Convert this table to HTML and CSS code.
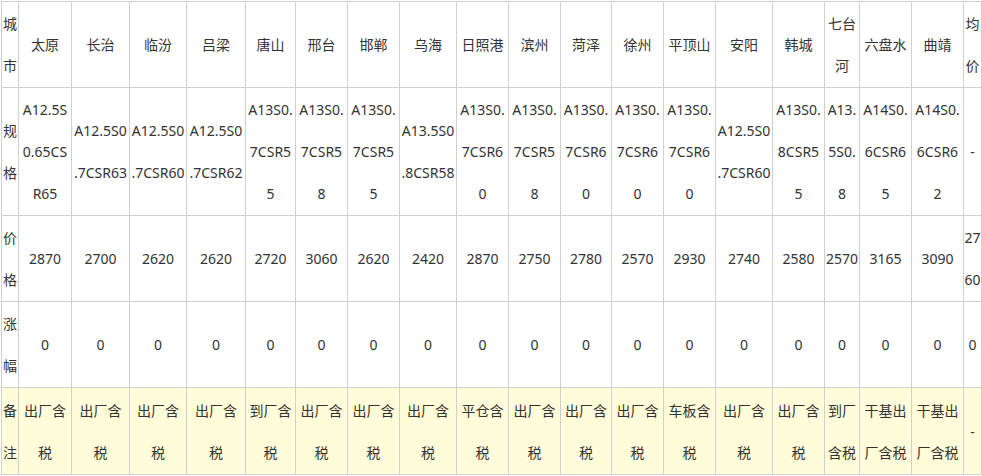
FILE: index.html
```html
<!DOCTYPE html>
<html lang="zh">
<head>
<meta charset="utf-8">
<title>价格表</title>
<link rel="stylesheet" href="styles.css">
</head>
<body>
<div class="table">
  <div class="c">城<br>市</div>
  <div class="c">太原</div>
  <div class="c">长治</div>
  <div class="c">临汾</div>
  <div class="c">吕梁</div>
  <div class="c">唐山</div>
  <div class="c">邢台</div>
  <div class="c">邯郸</div>
  <div class="c">乌海</div>
  <div class="c">日照港</div>
  <div class="c">滨州</div>
  <div class="c">菏泽</div>
  <div class="c">徐州</div>
  <div class="c">平顶山</div>
  <div class="c">安阳</div>
  <div class="c">韩城</div>
  <div class="c">七台<br>河</div>
  <div class="c">六盘水</div>
  <div class="c">曲靖</div>
  <div class="c">均<br>价</div>

  <div class="c">规<br>格</div>
  <div class="c">A12.5S<br>0.65CS<br>R65</div>
  <div class="c">A12.5S0<br>.7CSR63</div>
  <div class="c">A12.5S0<br>.7CSR60</div>
  <div class="c">A12.5S0<br>.7CSR62</div>
  <div class="c">A13S0.<br>7CSR5<br>5</div>
  <div class="c">A13S0.<br>7CSR5<br>8</div>
  <div class="c">A13S0.<br>7CSR5<br>5</div>
  <div class="c">A13.5S0<br>.8CSR58</div>
  <div class="c">A13S0.<br>7CSR6<br>0</div>
  <div class="c">A13S0.<br>7CSR5<br>8</div>
  <div class="c">A13S0.<br>7CSR6<br>0</div>
  <div class="c">A13S0.<br>7CSR6<br>0</div>
  <div class="c">A13S0.<br>7CSR6<br>0</div>
  <div class="c">A12.5S0<br>.7CSR60</div>
  <div class="c">A13S0.<br>8CSR5<br>5</div>
  <div class="c">A13.<br>5S0.<br>8</div>
  <div class="c">A14S0.<br>6CSR6<br>5</div>
  <div class="c">A14S0.<br>6CSR6<br>2</div>
  <div class="c">-</div>

  <div class="c">价<br>格</div>
  <div class="c">2870</div>
  <div class="c">2700</div>
  <div class="c">2620</div>
  <div class="c">2620</div>
  <div class="c">2720</div>
  <div class="c">3060</div>
  <div class="c">2620</div>
  <div class="c">2420</div>
  <div class="c">2870</div>
  <div class="c">2750</div>
  <div class="c">2780</div>
  <div class="c">2570</div>
  <div class="c">2930</div>
  <div class="c">2740</div>
  <div class="c">2580</div>
  <div class="c">2570</div>
  <div class="c">3165</div>
  <div class="c">3090</div>
  <div class="c">27<br>60</div>

  <div class="c">涨<br>幅</div>
  <div class="c">0</div>
  <div class="c">0</div>
  <div class="c">0</div>
  <div class="c">0</div>
  <div class="c">0</div>
  <div class="c">0</div>
  <div class="c">0</div>
  <div class="c">0</div>
  <div class="c">0</div>
  <div class="c">0</div>
  <div class="c">0</div>
  <div class="c">0</div>
  <div class="c">0</div>
  <div class="c">0</div>
  <div class="c">0</div>
  <div class="c">0</div>
  <div class="c">0</div>
  <div class="c">0</div>
  <div class="c">0</div>

  <div class="c note">备<br>注</div>
  <div class="c note">出厂含<br>税</div>
  <div class="c note">出厂含<br>税</div>
  <div class="c note">出厂含<br>税</div>
  <div class="c note">出厂含<br>税</div>
  <div class="c note">到厂含<br>税</div>
  <div class="c note">出厂含<br>税</div>
  <div class="c note">出厂含<br>税</div>
  <div class="c note">出厂含<br>税</div>
  <div class="c note">平仓含<br>税</div>
  <div class="c note">出厂含<br>税</div>
  <div class="c note">出厂含<br>税</div>
  <div class="c note">出厂含<br>税</div>
  <div class="c note">车板含<br>税</div>
  <div class="c note">出厂含<br>税</div>
  <div class="c note">出厂含<br>税</div>
  <div class="c note">到厂<br>含税</div>
  <div class="c note">干基出<br>厂含税</div>
  <div class="c note">干基出<br>厂含税</div>
  <div class="c note">-</div>
</div>
</body>
</html>
```

FILE: styles.css
```css
html, body {
  margin: 0;
  padding: 0;
  background: #ffffff;
}

body {
  padding: 1px 0 0 1px;
  font-family: "Noto Sans", "Noto Sans CJK SC", sans-serif;
  font-size: 14px;
  color: #333333;
}

.table {
  display: grid;
  grid-template-columns: 17px 53px 58px 57px 59px 50px 52px 52px 57px 52px 52px 51px 52px 52px 57px 52px 35px 52px 52px 18px;
  grid-template-rows: 86px 128px 86px 86px 87px;
  border-left: 1px solid #cfcfcf;
  border-top: 1px solid #cfcfcf;
  width: max-content;
}

.c {
  box-sizing: border-box;
  display: flex;
  align-items: center;
  justify-content: center;
  text-align: center;
  line-height: 42px;
  white-space: nowrap;
  border-right: 1px solid #cfcfcf;
  border-bottom: 1px solid #cfcfcf;
  padding-top: 1px;
}

.note {
  background: #fffcd9;
}
```
